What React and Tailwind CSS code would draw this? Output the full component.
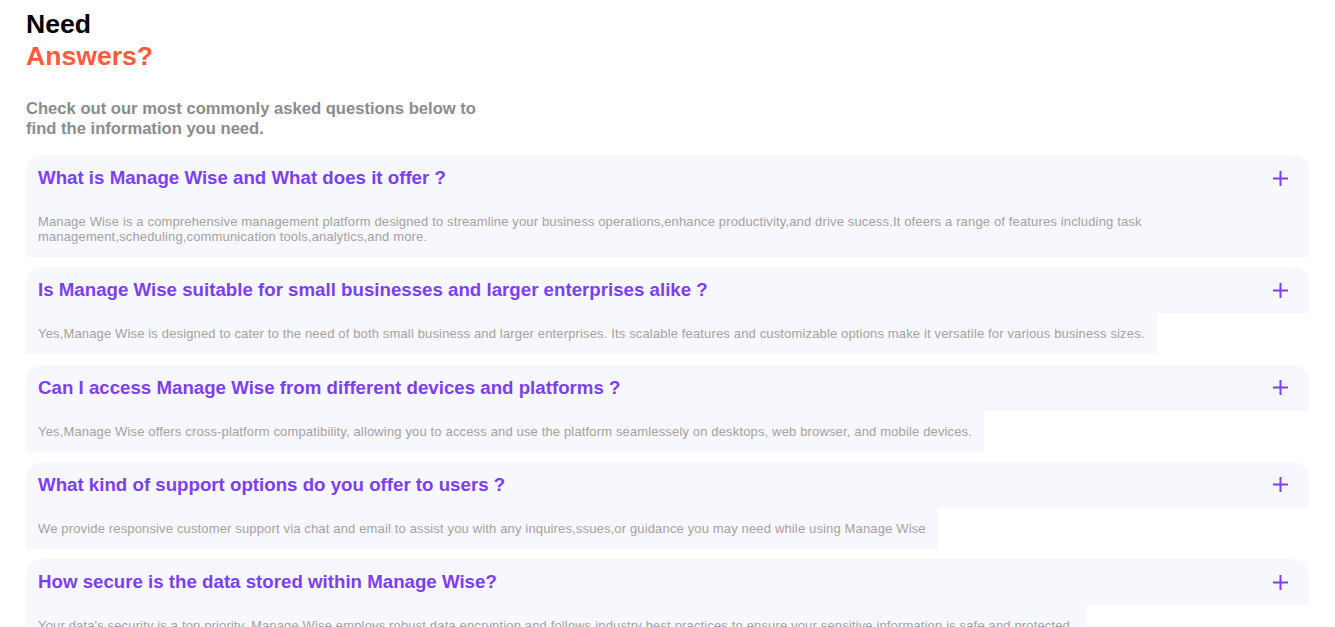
import React from 'react';

const faqs = [
  {
    q: 'What is Manage Wise and What does it offer ?',
    a: 'Manage Wise is a comprehensive management platform designed to streamline your business operations,enhance productivity,and drive sucess.It ofeers a range of features including task management,scheduling,communication tools,analytics,and more.',
  },
  {
    q: 'Is Manage Wise suitable for small businesses and larger enterprises alike ?',
    a: 'Yes,Manage Wise is designed to cater to the need of both small business and larger enterprises. Its scalable features and customizable options make it versatile for various business sizes.',
  },
  {
    q: 'Can I access Manage Wise from different devices and platforms ?',
    a: 'Yes,Manage Wise offers cross-platform compatibility, allowing you to access and use the platform seamlessely on desktops, web browser, and mobile devices.',
  },
  {
    q: 'What kind of support options do you offer to users ?',
    a: 'We provide responsive customer support via chat and email to assist you with any inquires,ssues,or guidance you may need while using Manage Wise',
  },
  {
    q: 'How secure is the data stored within Manage Wise?',
    a: "Your data's security is a top priority. Manage Wise employs robust data encryption and follows industry best practices to ensure your sensitive information is safe and protected.",
  },
];

function Plus() {
  return (
    <svg width="17" height="17" viewBox="0 0 17 17" fill="none" stroke="#7e3ff2" strokeWidth="2">
      <path d="M8.5 1v15M1 8.5h15" />
    </svg>
  );
}

export default function App() {
  return (
    <div className="min-h-screen bg-white px-[26px] pt-[8px] font-['Liberation_Sans',Arial,sans-serif]">
      <h1 className="text-[26.6px] leading-[32px] font-bold">
        <span className="block text-black">Need</span>
        <span className="block text-[#ff5c3f]">Answers?</span>
      </h1>
      <p className="mt-[27px] w-[465px] text-[16.6px] leading-[20px] font-bold text-[#8c8c8c]">
        Check out our most commonly asked questions below to find the information you need.
      </p>
      <div className="mt-[16px] flex flex-col gap-[10.3px]">
        {faqs.map((f, i) => (
          <div key={i} className="flex flex-col items-start">
            <div className="flex h-[46px] w-full items-center justify-between rounded-t-[16px] bg-[#f7f8fd] pl-[12px] pr-[20px]">
              <span className="text-[18.7px] font-bold text-[#7e3ff2]">{f.q}</span>
              <Plus />
            </div>
            <div className="max-w-full bg-[#f7f8fd] px-[12px] py-[13px] text-[13px] leading-[15px] tracking-[0.15px] text-[#a6a1a1]">
              {f.a}
            </div>
          </div>
        ))}
      </div>
    </div>
  );
}
